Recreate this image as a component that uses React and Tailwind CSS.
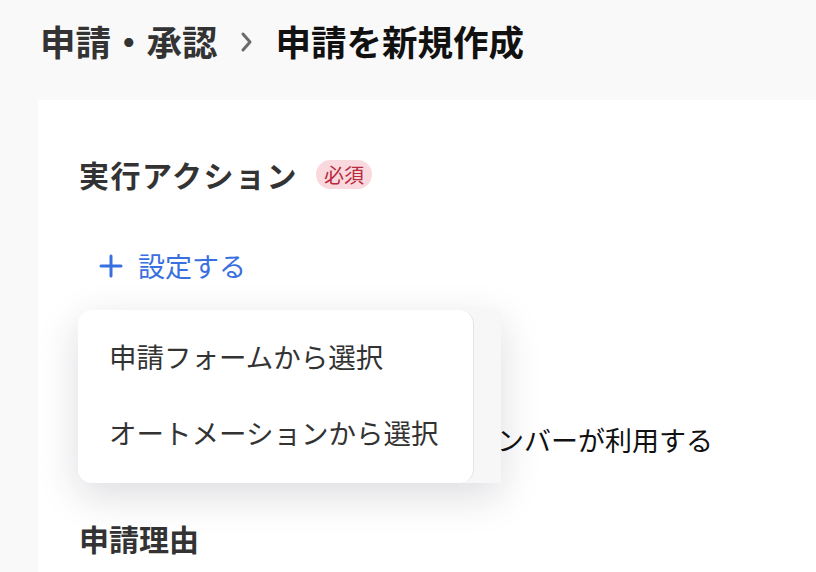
function Chevron() {
  return (
    <svg className="w-[14px] h-[22px]" viewBox="0 0 14 22" fill="none" stroke="#6b6b6b" strokeWidth="3" strokeLinecap="round" strokeLinejoin="round">
      <path d="M3 3l7 8-7 8" />
    </svg>
  )
}

function PlusIcon() {
  return (
    <svg className="w-[24px] h-[24px]" viewBox="0 0 24 24" fill="none" stroke="currentColor" strokeWidth="3" strokeLinecap="round">
      <path d="M12 2v20M2 12h20" />
    </svg>
  )
}

function Dropdown() {
  return (
    <div className="absolute left-[-1px] top-[24px] flex h-[173px] rounded-l-[14px] bg-[#f7f7f7] shadow-[0_12px_40px_rgba(20,20,50,0.15)]">
      <div className="w-[396px] rounded-[14px] bg-white border-r border-[#e4e4e4] pt-[9px] pb-[12px]">
        <div className="h-[76px] flex items-center px-[31px] text-[27.5px] text-[#333]">申請フォームから選択</div>
        <div className="h-[76px] flex items-center px-[31px] text-[27.5px] text-[#333]">オートメーションから選択</div>
      </div>
      <div className="w-[27px]" />
    </div>
  )
}

function App() {
  return (
    <div className="h-[572px] overflow-hidden bg-[#f9f9f9]" style={{ fontFamily: '"Noto Sans CJK JP", "Noto Sans", sans-serif' }}>
      {/* breadcrumb */}
      <div className="h-[100px] pl-[40px] pt-[17px]">
        <div className="flex items-center leading-[48px] text-[35.5px] font-bold">
          <span className="text-[#333]">申請・承認</span>
          <span className="mx-[22px] mt-[2px]"><Chevron /></span>
          <span className="text-[#111]">申請を新規作成</span>
        </div>
      </div>

      {/* card */}
      <div className="ml-[38px] bg-white h-[472px] pl-[41px] pt-[54px]">
        <div className="flex items-center h-[40px] gap-[18px]">
          <span className="text-[30px] font-semibold text-[#333] tracking-[1.5px]">実行アクション</span>
          <span className="h-[29px] px-[8px] rounded-full bg-[#fad9de] text-[#b72a3f] text-[20px] leading-[29px]">必須</span>
        </div>

        <div className="mt-[52px] flex items-center h-[40px] pl-[20px] gap-[15px] text-[#3a6fe0]">
          <PlusIcon />
          <span className="text-[27px]">設定する</span>
        </div>

        <div className="relative">
          <div className="pt-[134px]">
            <div className="h-[40px] flex items-center pl-[418px] text-[27px] text-[#111]">ンバーが利用する</div>
          </div>
          <div className="mt-[58px] h-[40px] flex items-center text-[30px] font-semibold text-[#333]">申請理由</div>
          <Dropdown />
        </div>
      </div>
    </div>
  )
}

export default App
